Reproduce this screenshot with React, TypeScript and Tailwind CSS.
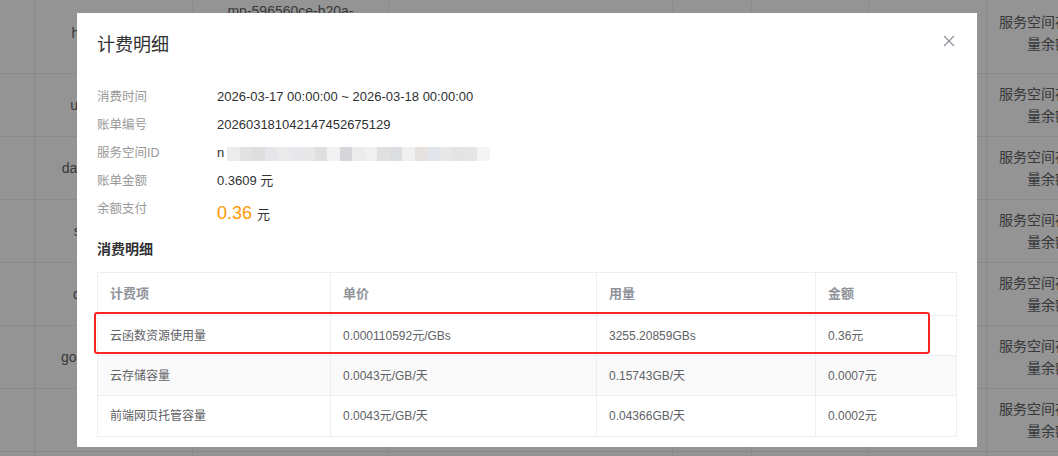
import React from "react";

const font = "font-['Liberation_Sans','Noto_Sans_CJK_SC',sans-serif]";

interface BgRow {
  name: string;
  mp: string[];
  tall?: boolean;
}

const bgRows: BgRow[] = [
  { name: "hbuilderx-test", mp: ["mp-596560ce-b20a-", "4c3d-9e1f-", "7a2b9c0d1e2f"], tall: true },
  { name: "uni-app-demo", mp: ["mp-1a2b3c4d"] },
  { name: "database-bucket", mp: ["mp-5e6f7a8b"] },
  { name: "shop-service", mp: ["mp-9c0d1e2f"] },
  { name: "dev-cloud-01", mp: ["mp-3a4b5c6d"] },
  { name: "goods-managers", mp: ["mp-7e8f9a0b"] },
  { name: "test", mp: ["mp-1c2d3e4f"] },
  { name: "temp", mp: ["mp-5a6b7c8d"] },
];

const infoRows = [
  { label: "消费时间", value: "2026-03-17 00:00:00 ~ 2026-03-18 00:00:00" },
  { label: "账单编号", value: "202603181042147452675129" },
];

const blurBlocks = [
  "bg-[#ececec]",
  "bg-[#e2e2e2]",
  "bg-[#dedede]",
  "bg-[#e4e6ea]",
  "bg-[#eaeaea]",
  "bg-[#e6e8ee]",
  "bg-[#e8e8e8]",
  "bg-[#e0e0e0]",
  "bg-[#f2f2f2]",
  "bg-[#d6d6da]",
  "bg-[#ececec]",
  "bg-[#f0f0f0]",
  "bg-[#e0e0e0]",
  "bg-[#dcdde0]",
  "bg-[#f0f0f0]",
  "bg-[#e6e2e0]",
  "bg-[#e2e6ea]",
  "bg-[#e8e8e8]",
  "bg-[#e4e4e4]",
  "bg-[#e6e6e6]",
  "bg-[#f4f4f4]",
];

const detailRows = [
  { item: "云函数资源使用量", price: "0.000110592元/GBs", usage: "3255.20859GBs", amount: "0.36元" },
  { item: "云存储容量", price: "0.0043元/GB/天", usage: "0.15743GB/天", amount: "0.0007元" },
  { item: "前端网页托管容量", price: "0.0043元/GB/天", usage: "0.04366GB/天", amount: "0.0002元" },
];

function BackgroundTable() {
  return (
    <div className="flex flex-col -mt-[7px] w-[1109px]">
      {bgRows.map((r, i) => (
        <div
          key={i}
          className={`flex border-b border-[#ebeef5] text-[14px] text-[#606266] ${r.tall ? "h-[81px]" : "h-[63px]"}`}
        >
          <div className="w-[35px] border-r border-[#ebeef5]" />
          <div className="w-[158px] border-r border-[#ebeef5] flex items-center justify-center whitespace-nowrap">
            {r.name}
          </div>
          <div className="w-[196px] border-r border-[#ebeef5] flex flex-col items-center justify-center leading-[22px] whitespace-nowrap">
            {r.mp.map((line) => (
              <span key={line}>{line}</span>
            ))}
          </div>
          <div className="w-[284px] border-r border-[#ebeef5]" />
          <div className="w-[79px] border-r border-[#ebeef5]" />
          <div className="w-[117px] border-r border-[#ebeef5]" />
          <div className="w-[118px] border-r border-[#ebeef5]" />
          <div className="w-[122px] px-3 flex items-center justify-center text-center leading-[22px]">
            服务空间存储容量余额
          </div>
        </div>
      ))}
    </div>
  );
}

export default function App() {
  return (
    <div className={`relative w-[1058px] h-[456px] overflow-hidden bg-white ${font}`}>
      <BackgroundTable />

      {/* overlay */}
      <div className="absolute inset-0 bg-black/[0.42]" />

      {/* dialog */}
      <div className="absolute left-[77px] top-[13px] w-[900px] h-[434px] bg-white overflow-hidden px-5">
        <div className="flex items-center justify-between h-[64px] pt-[1px]">
          <span className="text-[18px] text-[#303133]">计费明细</span>
          <svg width="12" height="12" viewBox="0 0 12 12" className="mr-[2px] mt-[-10px]">
            <path d="M1 1L11 11M11 1L1 11" stroke="#909399" strokeWidth="1.3" />
          </svg>
        </div>

        <div className="pt-[6px] text-[13px]">
          {infoRows.map((r) => (
            <div key={r.label} className="flex h-[28px] items-center">
              <span className="w-[120px] text-[12.5px] text-[#999]">{r.label}</span>
              <span className="text-[#303133]">{r.value}</span>
            </div>
          ))}
          <div className="flex h-[28px] items-center">
            <span className="w-[120px] text-[12.5px] text-[#999]">服务空间ID</span>
            <span className="text-[#303133]">n</span>
            <div className="flex h-[14px] mt-[2px] ml-[3px]">
              {blurBlocks.map((c, i) => (
                <div key={i} className={`w-[12.5px] h-full ${c}`} />
              ))}
            </div>
          </div>
          <div className="flex h-[28px] items-center">
            <span className="w-[120px] text-[12.5px] text-[#999]">账单金额</span>
            <span className="text-[#303133]">0.3609 元</span>
          </div>
          <div className="flex h-[36px]">
            <span className="w-[120px] text-[12.5px] text-[#999] leading-[28px]">余额支付</span>
            <span className="flex items-baseline pt-[5px]">
              <span className="text-[18px] text-[#ff9900]">0.36</span>
              <span className="ml-[5px] text-[#303133]">元</span>
            </span>
          </div>
        </div>

        <div className="mt-[8px] text-[14px] font-bold text-[#303133] leading-[20px]">消费明细</div>

        <div className="relative mt-[13px] border border-[#ebeef5] text-[12px] w-[860px]">
          <div className="flex h-[43px] items-center font-bold text-[13px] text-[#909399] border-b border-[#ebeef5]">
            <div className="w-[233px] h-full flex items-center px-3 border-r border-[#ebeef5]">计费项</div>
            <div className="w-[266px] h-full flex items-center px-3 border-r border-[#ebeef5]">单价</div>
            <div className="w-[219px] h-full flex items-center px-3 border-r border-[#ebeef5]">用量</div>
            <div className="flex-1 h-full flex items-center px-3">金额</div>
          </div>
          {detailRows.map((r, i) => (
            <div
              key={r.item}
              className={`flex h-[40px] text-[#606266] ${i < detailRows.length - 1 ? "border-b border-[#ebeef5]" : ""} ${i === 1 ? "bg-[#fafafa]" : ""}`}
            >
              <div className="w-[233px] flex items-center px-3 border-r border-[#ebeef5]">{r.item}</div>
              <div className="w-[266px] flex items-center px-3 border-r border-[#ebeef5]">{r.price}</div>
              <div className="w-[219px] flex items-center px-3 border-r border-[#ebeef5]">{r.usage}</div>
              <div className="flex-1 flex items-center px-3">{r.amount}</div>
            </div>
          ))}
        </div>

        {/* highlight annotation */}
        <div className="absolute left-[17px] top-[299px] w-[836px] h-[42px] border-2 border-[#ff2424] rounded-[3px]" />
      </div>
    </div>
  );
}
